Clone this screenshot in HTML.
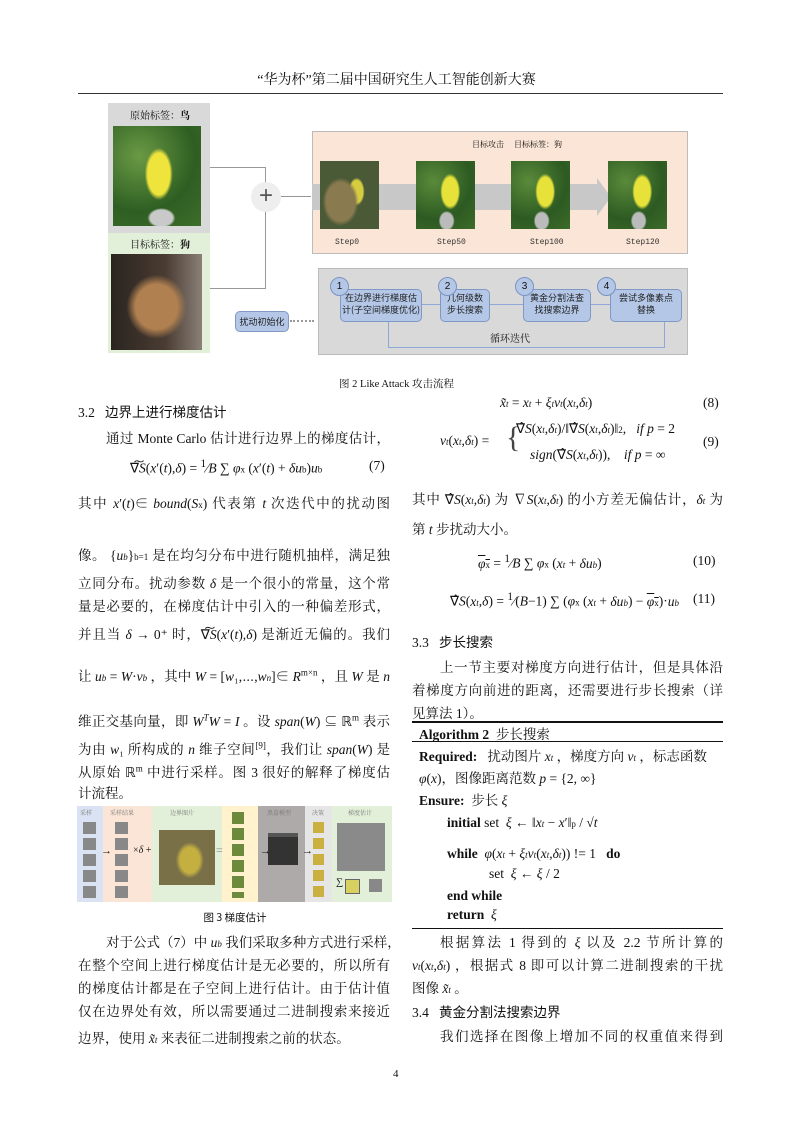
<!DOCTYPE html>
<html><head><meta charset="utf-8">
<style>
body{margin:0;background:#fff;}
#p{position:relative;width:793px;height:1122px;overflow:hidden;font-family:"Liberation Serif","Noto Serif CJK SC","Noto Sans CJK SC",serif;color:#111;font-size:13.5px;}
.a{position:absolute;white-space:nowrap;}
.L{position:absolute;left:78px;width:312px;text-align:justify;text-align-last:justify;white-space:nowrap;}
.R{position:absolute;left:412px;width:311px;text-align:justify;text-align-last:justify;white-space:nowrap;}
i{font-style:italic}
.s{font-size:9px}
.box{position:absolute;}
.nb{position:absolute;background:#b4c7e7;border:1px solid #8099c4;border-radius:5px;font-size:9px;text-align:center;color:#222;line-height:12px;font-family:"Noto Sans CJK SC",sans-serif;}
.c{position:absolute;width:17px;height:17px;border-radius:50%;background:#b4c7e7;border:1px solid #7a93c0;font-size:10px;text-align:center;line-height:17px;font-family:"Liberation Sans",sans-serif;}
.st{position:absolute;font-family:"Liberation Mono",monospace;font-size:8px;color:#333;}
.bird{position:absolute;width:59px;height:68px;background:radial-gradient(ellipse 10px 18px at 58% 45%,#e6e23a 80%,transparent 100%),radial-gradient(ellipse 8px 10px at 52% 88%,#bbb 80%,transparent),radial-gradient(circle at 30% 30%,#5a8a3a,#2c5a22 60%,#3d6b2a);}
.g{position:absolute;background:#888;}
.ar{position:absolute;height:1px;background:#8fa8d8;}
</style></head><body><div id="p">

<div class="a" style="left:0;width:793px;top:69px;text-align:center;font-size:14px;">“华为杯”第二届中国研究生人工智能创新大赛</div>
<div class="box" style="left:78px;top:93px;width:645px;height:1px;background:#333"></div>

<!-- Figure 2 -->
<div class="box" style="left:108px;top:103px;width:102px;height:130px;background:#d9d9d9"></div>
<div class="a" style="left:130px;top:107px;font-size:10px;">原始标签：<b>鸟</b></div>
<div class="box" style="left:113px;top:126px;width:88px;height:100px;background:radial-gradient(ellipse 14px 26px at 52% 48%,#eee43c 80%,transparent 100%),radial-gradient(ellipse 14px 10px at 55% 92%,#c9c9c9 80%,transparent),radial-gradient(circle at 30% 30%,#6a9a44,#2e5e22 60%,#3e6e2a)"></div>
<div class="box" style="left:108px;top:233px;width:102px;height:120px;background:#e2efd9"></div>
<div class="a" style="left:130px;top:236px;font-size:10px;">目标标签：<b>狗</b></div>
<div class="box" style="left:111px;top:254px;width:91px;height:96px;background:radial-gradient(ellipse 30px 32px at 50% 55%,#b08050 70%,transparent 100%),linear-gradient(90deg,#2a2420,#4a3c32 60%,#8a8078)"></div>
<div class="box" style="left:210px;top:167px;width:56px;height:1px;background:#999"></div>
<div class="box" style="left:210px;top:288px;width:56px;height:1px;background:#999"></div>
<div class="box" style="left:265px;top:167px;width:1px;height:122px;background:#999"></div>
<div class="box" style="left:251px;top:182px;width:30px;height:30px;border-radius:50%;background:#eee;text-align:center;line-height:28px;font-size:24px;color:#555;font-family:'Liberation Sans',sans-serif">+</div>
<div class="box" style="left:281px;top:196px;width:30px;height:1px;background:#999"></div>

<div class="box" style="left:312px;top:131px;width:374px;height:121px;background:#fbe5d6;border:1px solid #bbb"></div>
<div class="a" style="left:472px;top:139px;font-size:8px;">目标攻击 &nbsp;&nbsp;&nbsp; 目标标签：狗</div>
<div class="box" style="left:312px;top:184px;width:285px;height:26px;background:#c8c8c8"></div>
<div class="box" style="left:597px;top:178px;width:0;height:0;border-top:19px solid transparent;border-bottom:19px solid transparent;border-left:14px solid #c8c8c8"></div>
<div class="bird" style="left:320px;top:161px;background:radial-gradient(ellipse 18px 24px at 35% 60%,#8a7a50 80%,transparent),radial-gradient(ellipse 8px 14px at 62% 45%,#d6cc40 80%,transparent),#4b5a36"></div>
<div class="bird" style="left:416px;top:161px"></div>
<div class="bird" style="left:511px;top:161px"></div>
<div class="bird" style="left:608px;top:161px"></div>
<div class="st" style="left:335px;top:238px">Step0</div>
<div class="st" style="left:437px;top:238px">Step50</div>
<div class="st" style="left:530px;top:238px">Step100</div>
<div class="st" style="left:626px;top:238px">Step120</div>

<div class="box" style="left:318px;top:268px;width:368px;height:85px;background:#d9d9d9;border:1px solid #bbb"></div>
<div class="box" style="left:388px;top:347px;width:277px;height:1px;background:#8fa8d8"></div>
<div class="box" style="left:388px;top:320px;width:1px;height:28px;background:#8fa8d8"></div>
<div class="box" style="left:664px;top:320px;width:1px;height:28px;background:#8fa8d8"></div>
<div class="ar" style="left:420px;top:304px;width:20px"></div>
<div class="ar" style="left:488px;top:304px;width:35px"></div>
<div class="ar" style="left:590px;top:304px;width:20px"></div>
<div class="nb" style="left:340px;top:289px;width:80px;height:29px;padding-top:2px">在边界进行梯度估<br>计(子空间梯度优化)</div>
<div class="nb" style="left:440px;top:289px;width:48px;height:29px;padding-top:2px">几何级数<br>步长搜索</div>
<div class="nb" style="left:523px;top:289px;width:66px;height:29px;padding-top:2px">黄金分割法查<br>找搜索边界</div>
<div class="nb" style="left:610px;top:289px;width:70px;height:29px;padding-top:2px">尝试多像素点<br>替换</div>
<div class="c" style="left:330px;top:277px">1</div>
<div class="c" style="left:438px;top:277px">2</div>
<div class="c" style="left:515px;top:277px">3</div>
<div class="c" style="left:597px;top:277px">4</div>
<div class="a" style="left:490px;top:330px;font-size:10px;">循环迭代</div>
<div class="nb" style="left:235px;top:311px;width:52px;height:19px;line-height:19px">扰动初始化</div>
<div class="box" style="left:290px;top:320px;width:24px;border-top:2px dotted #999"></div>

<div class="a" style="left:0;width:793px;top:376px;text-align:center;font-size:10.5px;">图 2 Like Attack 攻击流程</div>

<!-- Left column -->
<div class="a" style="left:78px;top:401px;font-size:13.5px;font-family:'Liberation Serif','Noto Sans CJK SC',sans-serif">3.2 &nbsp;&nbsp;边界上进行梯度估计</div>
<div class="L" style="top:427px;left:106px;width:284px">通过 Monte Carlo 估计进行边界上的梯度估计，</div>
<div class="a" style="left:130px;top:458px;">∇͠<i>S</i>(<i>x</i>′(<i>t</i>),<i>δ</i>) = <sup>1</sup>⁄<i>B</i> ∑ <i>φ</i><span class="s">x</span> (<i>x</i>′(<i>t</i>) + <i>δu</i><span class="s">b</span>)<i>u</i><span class="s">b</span></div>
<div class="a" style="left:369px;top:458px;">(7)</div>
<div class="L" style="top:492px">其中 <i>x</i>′(<i>t</i>)∈ <i>bound</i>(<i>S</i><span class="s">x</span>) 代表第 <i>t</i> 次迭代中的扰动图</div>
<div class="L" style="top:544px">像。 {<i>u<span class="s">b</span></i>}<span class="s">b=1</span> 是在均匀分布中进行随机抽样，满足独</div>
<div class="L" style="top:572px">立同分布。扰动参数 <i>δ</i> 是一个很小的常量，这个常</div>
<div class="L" style="top:595px">量是必要的，在梯度估计中引入的一种偏差形式，</div>
<div class="L" style="top:623px">并且当 <i>δ</i> → 0⁺ 时，∇͠<i>S</i>(<i>x</i>′(<i>t</i>),<i>δ</i>) 是渐近无偏的。我们</div>
<div class="L" style="top:665px">让 <i>u<span class="s">b</span></i> = <i>W</i>·<i>v<span class="s">b</span></i> ，其中 <i>W</i> = [<i>w</i>₁,⋯,<i>w<span class="s">n</span></i>]∈ <i>R</i><sup class="s">m×n</sup> ，且 <i>W</i> 是 <i>n</i></div>
<div class="L" style="top:710px">维正交基向量，即 <i>W<sup class="s">T</sup>W</i> = <i>I</i> 。设 <i>span</i>(<i>W</i>) ⊆ ℝ<sup class="s">m</sup> 表示</div>
<div class="L" style="top:738px">为由 <i>w</i>₁ 所构成的 <i>n</i> 维子空间<sup class="s">[9]</sup>，我们让 <i>span</i>(<i>W</i>) 是</div>
<div class="L" style="top:761px">从原始 ℝ<sup class="s">m</sup> 中进行采样。图 3 很好的解释了梯度估</div>
<div class="a" style="left:78px;top:782px">计流程。</div>

<!-- Fig 3 -->
<div class="box" style="left:77px;top:806px;width:26px;height:96px;background:#dae3f3"></div>
<div class="box" style="left:103px;top:806px;width:49px;height:96px;background:#fbe5d6"></div>
<div class="box" style="left:152px;top:806px;width:70px;height:96px;background:#e2efd9"></div>
<div class="box" style="left:222px;top:806px;width:36px;height:96px;background:#fff2cc"></div>
<div class="box" style="left:258px;top:806px;width:47px;height:96px;background:#aeaaaa"></div>
<div class="box" style="left:305px;top:806px;width:27px;height:96px;background:#e7e6e6"></div>
<div class="box" style="left:332px;top:806px;width:60px;height:96px;background:#e2efd9"></div>
<div class="a" style="left:80px;top:808px;font-size:6px;color:#777">采样</div>
<div class="a" style="left:110px;top:808px;font-size:6px;color:#777">采样结果</div>
<div class="a" style="left:170px;top:808px;font-size:6px;color:#777">边界图片</div>
<div class="a" style="left:267px;top:808px;font-size:6px;color:#777">黑盒模型</div>
<div class="a" style="left:312px;top:808px;font-size:6px;color:#777">决策</div>
<div class="a" style="left:348px;top:808px;font-size:6px;color:#777">梯度估计</div>
<div class="g" style="left:83px;top:822px;width:13px;height:76px;background:repeating-linear-gradient(#888 0 12px,transparent 12px 16px)"></div>
<div class="g" style="left:115px;top:822px;width:13px;height:76px;background:repeating-linear-gradient(#888 0 12px,transparent 12px 16px)"></div>
<div class="a" style="left:101px;top:845px;font-size:11px">→</div>
<div class="a" style="left:133px;top:845px;font-size:10px">×<i>δ</i> +</div>
<div class="box" style="left:159px;top:830px;width:56px;height:55px;background:radial-gradient(ellipse 14px 18px at 55% 55%,#c4b040 70%,transparent),#7a7048"></div>
<div class="a" style="left:216px;top:843px;font-size:12px;color:#888">=</div>
<div class="g" style="left:232px;top:812px;width:12px;height:86px;background:repeating-linear-gradient(#6d8a3c 0 12px,transparent 12px 16px)"></div>
<div class="a" style="left:260px;top:845px;font-size:11px">→</div>
<div class="box" style="left:268px;top:833px;width:30px;height:28px;background:#333;border-top:4px solid #555"></div>
<div class="a" style="left:302px;top:845px;font-size:11px">→</div>
<div class="g" style="left:313px;top:822px;width:11px;height:76px;background:repeating-linear-gradient(#c9b040 0 11px,transparent 11px 16px)"></div>
<div class="box" style="left:337px;top:823px;width:48px;height:48px;background:#8a8a8a"></div>
<div class="a" style="left:336px;top:877px;font-size:10px">∑</div>
<div class="box" style="left:345px;top:879px;width:13px;height:13px;background:#d8d060;border:1px solid #666"></div>
<div class="box" style="left:369px;top:879px;width:13px;height:13px;background:#888"></div>
<div class="a" style="left:0;width:470px;top:910px;text-align:center;font-size:10.5px;font-family:'Noto Sans CJK SC',sans-serif">图 3 梯度估计</div>

<div class="L" style="top:931px;left:106px;width:284px">对于公式（7）中 <i>u<span class="s">b</span></i> 我们采取多种方式进行采样，</div>
<div class="L" style="top:954px">在整个空间上进行梯度估计是无必要的，所以所有</div>
<div class="L" style="top:977px">的梯度估计都是在子空间上进行估计。由于估计值</div>
<div class="L" style="top:1000px">仅在边界处有效，所以需要通过二进制搜索来接近</div>
<div class="a" style="left:78px;top:1027px">边界，使用 <i>x̃<span class="s">t</span></i> 来表征二进制搜索之前的状态。</div>

<!-- Right column -->
<div class="a" style="left:500px;top:395px;"><i>x̃<span class="s">t</span></i> = <i>x<span class="s">t</span></i> + <i>ξ<span class="s">t</span>v<span class="s">t</span></i>(<i>x<span class="s">t</span></i>,<i>δ<span class="s">t</span></i>)</div>
<div class="a" style="left:703px;top:395px;">(8)</div>
<div class="a" style="left:440px;top:433px;"><i>v<span class="s">t</span></i>(<i>x<span class="s">t</span></i>,<i>δ<span class="s">t</span></i>) =</div>
<div class="a" style="left:506px;top:418px;font-size:30px;font-weight:100;color:#444;line-height:40px">{</div>
<div class="a" style="left:516px;top:421px;">∇̂<i>S</i>(<i>x<span class="s">t</span></i>,<i>δ<span class="s">t</span></i>)/‖∇̂<i>S</i>(<i>x<span class="s">t</span></i>,<i>δ<span class="s">t</span></i>)‖<span class="s">2</span>, &nbsp; <i>if p</i> = 2</div>
<div class="a" style="left:530px;top:447px;"><i>sign</i>(∇̂<i>S</i>(<i>x<span class="s">t</span></i>,<i>δ<span class="s">t</span></i>)), &nbsp;&nbsp; <i>if p</i> = ∞</div>
<div class="a" style="left:703px;top:434px;">(9)</div>
<div class="R" style="top:488px">其中 ∇̂<i>S</i>(<i>x<span class="s">t</span></i>,<i>δ<span class="s">t</span></i>) 为 ∇<i>S</i>(<i>x<span class="s">t</span></i>,<i>δ<span class="s">t</span></i>) 的小方差无偏估计，<i>δ<span class="s">t</span></i> 为</div>
<div class="a" style="left:412px;top:518px">第 <i>t</i> 步扰动大小。</div>
<div class="a" style="left:478px;top:553px;"><span style="text-decoration:overline"><i>φ</i><span class="s">x</span></span> = <sup>1</sup>⁄<i>B</i> ∑ <i>φ</i><span class="s">x</span> (<i>x<span class="s">t</span></i> + <i>δu<span class="s">b</span></i>)</div>
<div class="a" style="left:693px;top:553px;">(10)</div>
<div class="a" style="left:450px;top:591px;">∇̂<i>S</i>(<i>x<span class="s">t</span></i>,<i>δ</i>) = <sup>1</sup>⁄(<i>B</i>−1) ∑ (<i>φ</i><span class="s">x</span> (<i>x<span class="s">t</span></i> + <i>δu<span class="s">b</span></i>) − <span style="text-decoration:overline"><i>φ</i><span class="s">x</span></span>)·<i>u<span class="s">b</span></i></div>
<div class="a" style="left:693px;top:591px;">(11)</div>
<div class="a" style="left:412px;top:631px;font-size:13.5px;font-family:'Liberation Serif','Noto Sans CJK SC',sans-serif">3.3 &nbsp;&nbsp;步长搜索</div>
<div class="R" style="top:656px;left:440px;width:283px">上一节主要对梯度方向进行估计，但是具体沿</div>
<div class="R" style="top:679px">着梯度方向前进的距离，还需要进行步长搜索（详</div>
<div class="a" style="left:412px;top:702px">见算法 1）。</div>
<div class="box" style="left:412px;top:721px;width:311px;height:2px;background:#111"></div>
<div class="a" style="left:419px;top:723px"><b>Algorithm 2</b> &nbsp;步长搜索</div>
<div class="box" style="left:412px;top:741px;width:311px;height:1px;background:#111"></div>
<div class="a" style="left:419px;top:745px"><b>Required:</b> &nbsp;&nbsp;扰动图片 <i>x<span class="s">t</span></i> ，梯度方向 <i>v<span class="s">t</span></i> ，标志函数</div>
<div class="a" style="left:419px;top:767px"><i>φ</i>(<i>x</i>)，图像距离范数 <i>p</i> = {2, ∞}</div>
<div class="a" style="left:419px;top:789px"><b>Ensure:</b> &nbsp;步长 <i>ξ</i></div>
<div class="a" style="left:447px;top:815px"><b>initial</b> set &nbsp;<i>ξ</i> ← ‖<i>x<span class="s">t</span></i> − <i>x</i>′‖<span class="s">p</span> / √<i>t</i></div>
<div class="a" style="left:447px;top:846px"><b>while</b> &nbsp;<i>φ</i>(<i>x<span class="s">t</span></i> + <i>ξ<span class="s">t</span>v<span class="s">t</span></i>(<i>x<span class="s">t</span></i>,<i>δ<span class="s">t</span></i>)) != 1 &nbsp;&nbsp;<b>do</b></div>
<div class="a" style="left:489px;top:866px">set &nbsp;<i>ξ</i> ← <i>ξ</i> / 2</div>
<div class="a" style="left:447px;top:888px"><b>end while</b></div>
<div class="a" style="left:447px;top:907px"><b>return</b> &nbsp;<i>ξ</i></div>
<div class="box" style="left:412px;top:928px;width:311px;height:1px;background:#111"></div>
<div class="R" style="top:931px;left:440px;width:283px">根据算法 1 得到的 <i>ξ</i> 以及 2.2 节所计算的</div>
<div class="R" style="top:954px"><i>v<span class="s">t</span></i>(<i>x<span class="s">t</span></i>,<i>δ<span class="s">t</span></i>) ，根据式 8 即可以计算二进制搜索的干扰</div>
<div class="a" style="left:412px;top:977px">图像 <i>x̃<span class="s">t</span></i> 。</div>
<div class="a" style="left:412px;top:1001px;font-size:13.5px;font-family:'Liberation Serif','Noto Sans CJK SC',sans-serif">3.4 &nbsp;&nbsp;黄金分割法搜索边界</div>
<div class="R" style="top:1025px;left:440px;width:283px">我们选择在图像上增加不同的权重值来得到</div>

<div class="a" style="left:393px;top:1068px;font-size:11px">4</div>
</div></body></html>
